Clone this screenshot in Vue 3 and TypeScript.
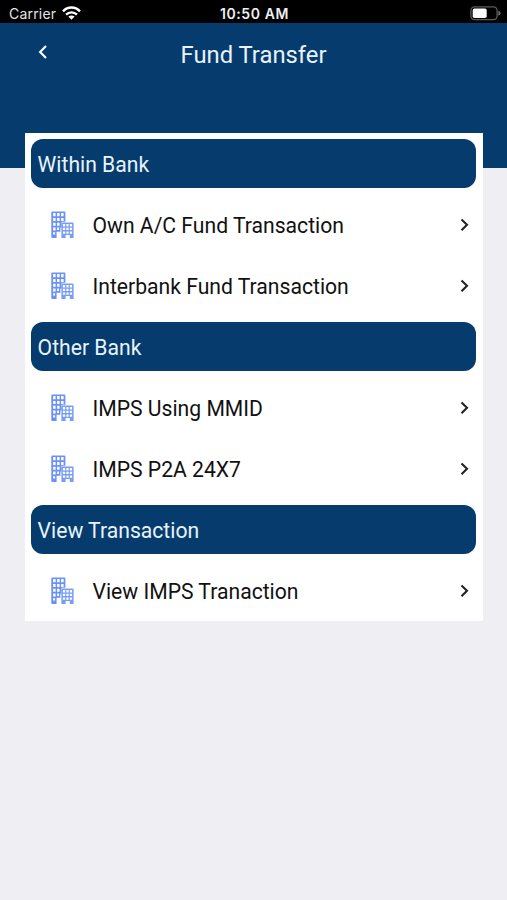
<script setup lang="ts">
interface Section {
  title: string
  items: string[]
}

const sections: Section[] = [
  { title: 'Within Bank', items: ['Own A/C Fund Transaction', 'Interbank Fund Transaction'] },
  { title: 'Other Bank', items: ['IMPS Using MMID', 'IMPS P2A 24X7'] },
  { title: 'View Transaction', items: ['View IMPS Tranaction'] },
]
</script>

<template>
  <div class="screen">
    <div class="status">
      <div class="carrier">
        <span>Carrier</span>
        <svg class="wifi" width="19" height="14" viewBox="0 0 19 14" fill="none" stroke="#fff" stroke-width="2.4">
          <path d="M1 5.3C5.8 0.3 13.2 0.3 18 5.3" />
          <path d="M4.1 8.6C7.1 5.6 11.9 5.6 14.9 8.6" />
          <path d="M9.5 13.7L6.4 10.6C8.2 9 10.8 9 12.6 10.6Z" fill="#fff" stroke="none" />
        </svg>
      </div>
      <span class="time">10:50 AM</span>
      <svg class="battery" width="31" height="15" viewBox="0 0 31 15">
        <rect x="0.9" y="0.9" width="26.2" height="12.8" rx="3.6" fill="none" stroke="#5c5c5c" stroke-width="1.3" />
        <rect x="2.7" y="2.6" width="14" height="9.4" rx="1.8" fill="#fff" />
        <path d="M28.4 4.8Q30.5 5.6 30.5 7.3T28.4 9.8Z" fill="#777" />
      </svg>
    </div>

    <header class="header">
      <button class="back" aria-label="Back">
        <svg width="10" height="14" viewBox="0 0 10 14" fill="none" stroke="#fff" stroke-width="2.1">
          <path d="M8 1L2.1 7L8 13" />
        </svg>
      </button>
      <h1>Fund Transfer</h1>
    </header>

    <main class="card">
      <section v-for="section in sections" :key="section.title">
        <div class="heading">
          <h2>{{ section.title }}</h2>
        </div>
        <div v-for="item in section.items" :key="item" class="row">
          <svg class="building" width="23" height="28" viewBox="0 0 23 28">
            <path
              fill="#6c91f5"
              fill-rule="evenodd"
              d="M1.5 0.4H13.4Q14.4 0.4 14.4 1.4V10.8H10.5V16.5H9.4V20.7H5.6V26.9H1.3Q0.3 26.9 0.3 25.9V1.4Q0.3 0.4 1.5 0.4ZM2.1 2.1V5.2H4.6V2.1ZM6.1 2.1V5.2H8.6V2.1ZM10.1 2.1V5.2H12.6V2.1ZM2.1 6.9V10H4.6V6.9ZM6.1 6.9V10H8.6V6.9ZM10.1 6.9V10H12.6V6.9ZM2.1 11.7V14.8H4.6V11.7ZM6.1 11.7V14.8H8.6V11.7ZM2.1 16.5V19.6H4.6V16.5ZM6.1 16.5V19H8V16.5ZM2.1 21.3V23.4H4.1V21.3Z"
            />
            <path
              fill="#789df6"
              fill-rule="evenodd"
              d="M11.3 11.6H21.6Q22.6 11.6 22.6 12.6V26.9H18.8V23.9H14.6V26.9H10.4V12.6Q10.4 11.6 11.3 11.6ZM11.9 13.1V15.5H14.2V13.1ZM15.4 13.1V15.5H17.6V13.1ZM18.8 13.1V15.5H21.1V13.1ZM11.9 16.8V19.1H14.2V16.8ZM15.4 16.8V19.1H17.6V16.8ZM18.8 16.8V19.1H21.1V16.8ZM11.9 20.4V22.7H14.2V20.4ZM15.4 20.4V22.7H17.6V20.4ZM18.8 20.4V22.7H21.1V20.4Z"
            />
          </svg>
          <span class="label">{{ item }}</span>
          <svg class="chevron" width="10" height="14" viewBox="0 0 10 14" fill="none" stroke="#222" stroke-width="2.1">
            <path d="M1.5 1.4L7 6.8L1.5 12.2" />
          </svg>
        </div>
      </section>
    </main>
  </div>
</template>

<style>
body {
  background: #efeef3;
}
</style>

<style scoped>
.screen {
  box-sizing: border-box;
  width: 507px;
  height: 900px;
  overflow: hidden;
  background: #efeef3;
  font-family: Roboto, sans-serif;
}
.status {
  box-sizing: border-box;
  display: grid;
  grid-template-columns: 1fr auto 1fr;
  align-items: center;
  height: 23px;
  padding: 4px 6px 0 9px;
  background: #000;
  color: #e4e4e4;
  font-family: Inter, sans-serif;
  font-size: 14px;
  line-height: 19px;
}
.carrier {
  display: flex;
  align-items: center;
  gap: 5.5px;
  letter-spacing: 0.2px;
}
.wifi {
  margin-top: -1px;
}
.time {
  margin-right: 1px;
  color: #f0f0f0;
  font-size: 14px;
  font-weight: 600;
  letter-spacing: 0.6px;
}
.battery {
  justify-self: end;
}
.header {
  box-sizing: border-box;
  display: grid;
  grid-template-columns: 60px 1fr 60px;
  align-items: start;
  height: 145px;
  padding-top: 15px;
  background: #053c6d;
}
.back {
  display: flex;
  padding: 7px 0 0 38px;
  border: 0;
  background: none;
}
h1 {
  margin: 0;
  color: #e9f3fc;
  font-size: 23.8px;
  font-weight: 400;
  line-height: 34px;
  text-align: center;
}
.card {
  width: 457.5px;
  margin: -35px 0 0 25px;
  background: #fff;
}
.heading {
  box-sizing: border-box;
  height: 61.05px;
  padding: 6.1px;
}
h2 {
  box-sizing: border-box;
  height: 48.9px;
  margin: 0;
  padding-left: 6.5px;
  border-radius: 12px;
  background: #053c6d;
  color: #e9f3fc;
  font-size: 21.15px;
  font-weight: 400;
  line-height: 51px;
}
.row {
  box-sizing: border-box;
  display: flex;
  align-items: center;
  height: 61.05px;
  padding: 0 13px 0 25.5px;
}
.label {
  flex: 1;
  margin-left: 19px;
  padding-top: 2px;
  color: #111;
  font-size: 21.15px;
  line-height: 30px;
}
</style>
